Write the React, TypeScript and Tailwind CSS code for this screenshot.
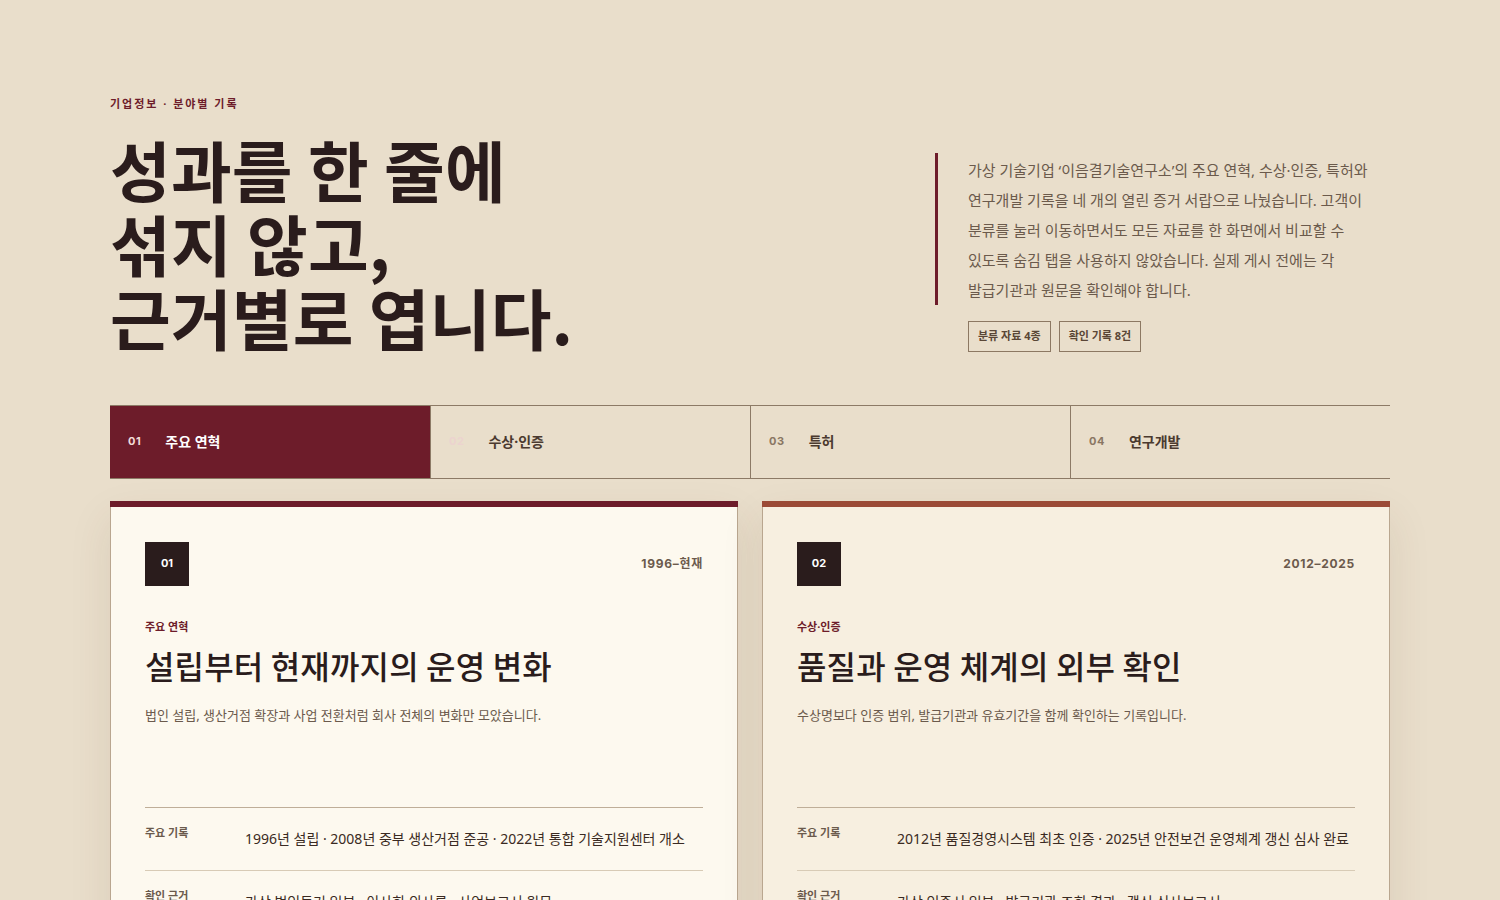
import React from 'react'

const sans = "font-['Noto_Sans','Noto_Sans_CJK_KR',sans-serif]"

const tabs = [
  { n: '01', label: '주요 연혁' },
  { n: '02', label: '수상·인증' },
  { n: '03', label: '특허' },
  { n: '04', label: '연구개발' },
]

const cards = [
  {
    n: '01',
    period: '1996–현재',
    kicker: '주요 연혁',
    title: '설립부터 현재까지의 운영 변화',
    desc: '법인 설립, 생산거점 확장과 사업 전환처럼 회사 전체의 변화만 모았습니다.',
    record: '1996년 설립 · 2008년 중부 생산거점 준공 · 2022년 통합 기술지원센터 개소',
    proof: '가상 법인등기 일부 · 이사회 의사록 · 사업보고서 원문',
    bar: 'bg-[#6d1c2a]',
    bg: 'bg-[#fdf9ef]',
  },
  {
    n: '02',
    period: '2012–2025',
    kicker: '수상·인증',
    title: '품질과 운영 체계의 외부 확인',
    desc: '수상명보다 인증 범위, 발급기관과 유효기간을 함께 확인하는 기록입니다.',
    record: '2012년 품질경영시스템 최초 인증 · 2025년 안전보건 운영체계 갱신 심사 완료',
    proof: '가상 인증서 일부 · 발급기관 조회 결과 · 갱신 심사보고서',
    bar: 'bg-[#9b4a36]',
    bg: 'bg-[#f7efe0]',
  },
]

export default function App() {
  return (
    <div className={`min-h-screen bg-[#e9decb] text-[#2a1c1c] ${sans}`}>
      <div className="mx-auto w-[1280px] pt-[96px]">
        {/* hero */}
        <div className="flex justify-between">
          <div>
            <p className="text-[11px] font-bold tracking-[0.18em] text-[#6d1c2a]">기업정보 · 분야별 기록</p>
            <h1 className="mt-[18px] font-['Noto_Sans_CJK_KR',sans-serif] text-[66px] font-semibold leading-[74px] tracking-[0.003em] text-[#2a1c1c]">
              <span className="block">성과를 한 줄에</span>
              <span className="block">섞지 않고,</span>
              <span className="block">근거별로 엽니다.</span>
            </h1>
          </div>
          <div className="mt-[57px] w-[455px]">
            <div className="border-l-[3px] border-[#6d1c2a] pl-[30px] pt-[2px]">
              <p className="w-[420px] break-keep text-[15px] leading-[30px] text-[#6b5a4c]">
                가상 기술기업 ‘이음결기술연구소’의 주요 연혁, 수상·인증, 특허와 연구개발 기록을 네 개의 열린 증거 서랍으로 나눴습니다. 고객이 분류를 눌러 이동하면서도 모든 자료를 한 화면에서 비교할 수 있도록 숨김 탭을 사용하지 않았습니다. 실제 게시 전에는 각 발급기관과 원문을 확인해야 합니다.
              </p>
            </div>
            <div className="mt-[16px] ml-[33px] flex gap-2">
              <span className="border border-[#8c7863] px-[9px] py-[6px] text-[11px] font-bold text-[#5a4636]">분류 자료 4종</span>
              <span className="border border-[#8c7863] px-[9px] py-[6px] text-[11px] font-bold text-[#5a4636]">확인 기록 8건</span>
            </div>
          </div>
        </div>

        {/* tabs */}
        <div className="mt-[52px] grid grid-cols-4 border-y border-[#8c7a66]">
          {tabs.map((t, i) => (
            <div
              key={t.n}
              className={`flex h-[72px] items-center gap-[24px] px-[18px] ${i > 0 ? 'border-l border-[#8c7a66]' : ''} ${i === 0 ? 'bg-[#6d1c2a]' : ''}`}
            >
              <span
                className={`font-['Inter',sans-serif] text-[11px] font-bold tracking-[0.05em] ${i === 0 ? 'text-[#f2dcd8]' : i === 1 ? 'text-[#ecd3cf]' : 'text-[#8a7663]'}`}
              >
                {t.n}
              </span>
              <span className={`text-[14px] font-bold ${i === 0 ? 'text-white' : 'text-[#4b3a2f]'}`}>{t.label}</span>
            </div>
          ))}
        </div>

        {/* cards */}
        <div className="mt-[22px] grid grid-cols-2 gap-[24px]">
          {cards.map((c) => (
            <div key={c.n} className={`${c.bg} border border-t-0 border-[#b9a68f] shadow-[0_18px_40px_rgba(90,60,30,0.10)]`}>
              <div className={`${c.bar} -mx-px h-[6px]`} />
              <div className="px-[34px] pt-[35px] pb-[40px]">
                <div className="flex items-center justify-between">
                  <div className="flex h-[44px] w-[44px] items-center justify-center bg-[#2a1c1c] font-['Inter',sans-serif] text-[11px] font-bold text-white">
                    {c.n}
                  </div>
                  <span className="font-['Inter','Noto_Sans_CJK_KR',sans-serif] text-[12px] font-bold tracking-[0.06em] text-[#6b5a4c]">{c.period}</span>
                </div>
                <p className="mt-[33px] text-[11px] font-bold text-[#6d1c2a]">{c.kicker}</p>
                <h2 className="mt-[8px] font-['Noto_Sans_CJK_KR',sans-serif] text-[32px] font-medium leading-[44px] tracking-[0.005em] text-[#2a1c1c]">{c.title}</h2>
                <p className="mt-[19px] text-[13px] text-[#6b5a4c]">{c.desc}</p>
                <div className="mt-[81px] border-t border-[#bfae98]">
                  <div className="flex pt-[17px] pb-[21px]">
                    <span className="w-[100px] shrink-0 text-[11px] font-bold text-[#6b5a4c]">주요 기록</span>
                    <span className="mt-[3px] text-[14px] text-[#3a2a22]">{c.record}</span>
                  </div>
                  <div className="flex border-t border-[#d8cbb6] pt-[17px] pb-[21px]">
                    <span className="w-[100px] shrink-0 text-[11px] font-bold text-[#6b5a4c]">확인 근거</span>
                    <span className="mt-[3px] text-[14px] text-[#3a2a22]">{c.proof}</span>
                  </div>
                </div>
              </div>
            </div>
          ))}
        </div>
        <div className="h-[60px]" />
      </div>
    </div>
  )
}
